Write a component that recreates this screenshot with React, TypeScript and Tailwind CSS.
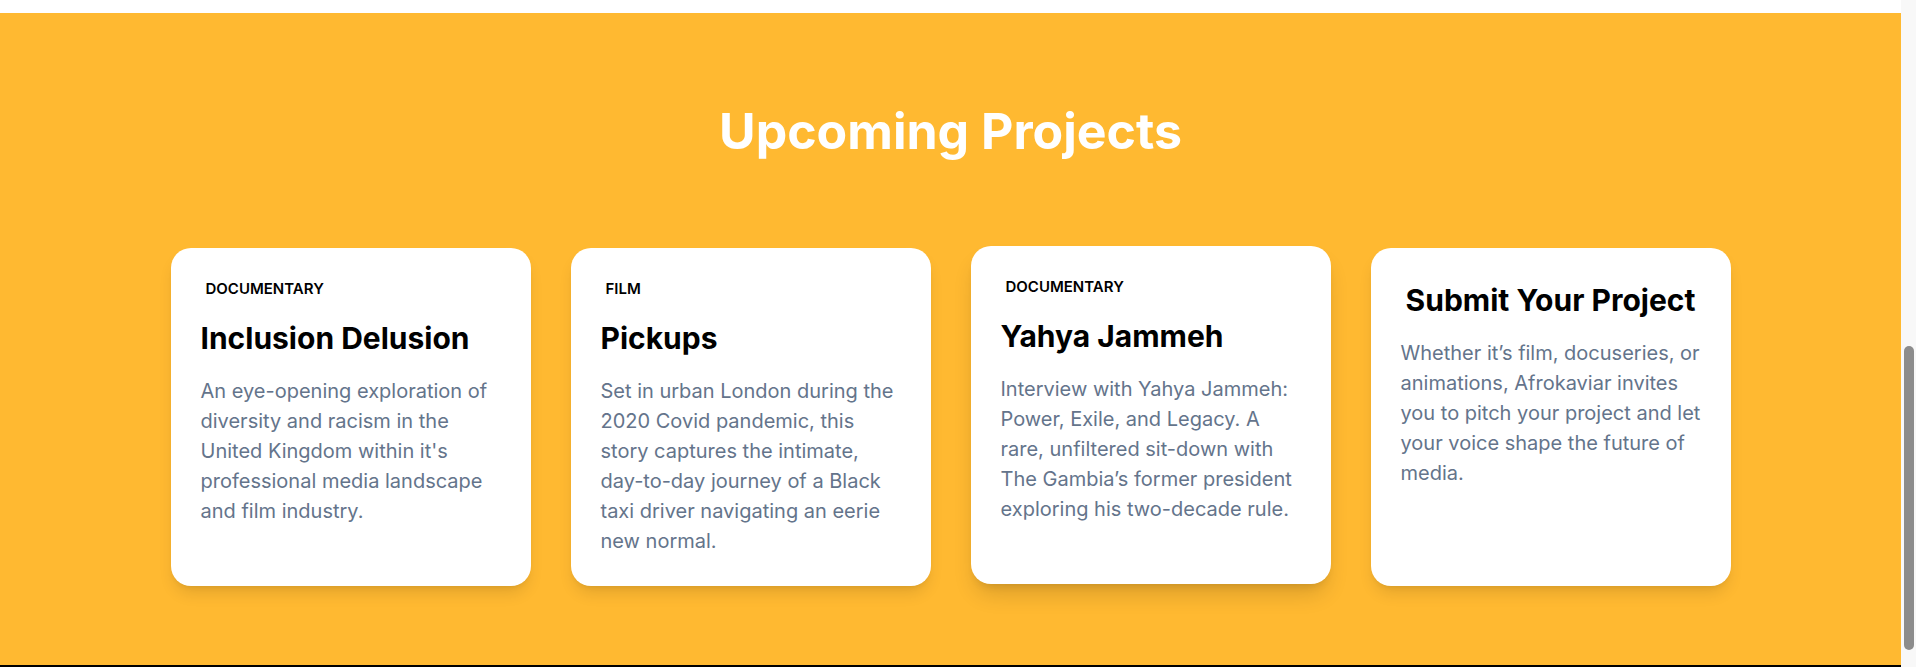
import React from "react";

type Project = {
  tag?: string;
  title: string;
  desc: string;
  lifted?: boolean;
  center?: boolean;
};

const projects: Project[] = [
  {
    tag: "DOCUMENTARY",
    title: "Inclusion Delusion",
    desc: "An eye-opening exploration of diversity and racism in the United Kingdom within it's professional media landscape and film industry.",
  },
  {
    tag: "FILM",
    title: "Pickups",
    desc: "Set in urban London during the 2020 Covid pandemic, this story captures the intimate, day-to-day journey of a Black taxi driver navigating an eerie new normal.",
  },
  {
    tag: "DOCUMENTARY",
    title: "Yahya Jammeh",
    desc: "Interview with Yahya Jammeh: Power, Exile, and Legacy. A rare, unfiltered sit-down with The Gambia\u2019s former president exploring his two-decade rule.",
    lifted: true,
  },
  {
    title: "Submit Your Project",
    desc: "Whether it\u2019s film, docuseries, or animations, Afrokaviar invites you to pitch your project and let your voice shape the future of media.",
    center: true,
  },
];

function Card({ p }: { p: Project }) {
  return (
    <div
      className={
        p.lifted
          ? "bg-white rounded-[20px] px-[30px] pt-[30px] pb-[30px] -translate-y-[2px] shadow-[0_14px_22px_-4px_rgba(0,0,0,0.14),0_6px_10px_-5px_rgba(0,0,0,0.12)]"
          : "bg-white rounded-[20px] px-[30px] pt-[30px] pb-[30px] shadow-[0_10px_16px_-3px_rgba(0,0,0,0.11),0_4px_6px_-4px_rgba(0,0,0,0.1)]"
      }
    >
      {p.tag ? (
        <div className="ml-[5px] mt-[1px] mb-[21px] text-[15px] leading-[20px] font-semibold text-black">
          {p.tag}
        </div>
      ) : null}
      <h3
        className={
          p.center
            ? "mt-[4px] mb-[20px] text-center text-[30px] leading-[36px] font-bold text-black"
            : "mb-[20px] text-[30px] leading-[36px] font-bold text-black"
        }
      >
        {p.title}
      </h3>
      <p className="text-[20px] leading-[30px] text-[#64748b]">{p.desc}</p>
    </div>
  );
}

export default function App() {
  return (
    <div
      className="flex w-full h-[667px] overflow-hidden bg-white"
      style={{ fontFamily: "Inter, 'Noto Sans', sans-serif" }}
    >
      <div className="flex-1 flex flex-col min-w-0">
        <div className="h-[13px] bg-white" />
        <section className="flex-1 bg-[#ffb931] pt-[93px]">
          <h2 className="text-center text-[50px] leading-[50px] font-bold text-white">
            Upcoming Projects
          </h2>
          <div className="mx-auto mt-[92px] max-w-[1560px] grid grid-cols-4 gap-10">
            {projects.map((p) => (
              <Card key={p.title} p={p} />
            ))}
          </div>
        </section>
        <div className="h-[2px] bg-black" />
      </div>
      <div className="w-[15px] bg-[#f8f8f8] pt-[346px] flex flex-col items-center">
        <div className="w-[10px] h-[304px] rounded-full bg-[#8c8c8c]" />
      </div>
    </div>
  );
}
